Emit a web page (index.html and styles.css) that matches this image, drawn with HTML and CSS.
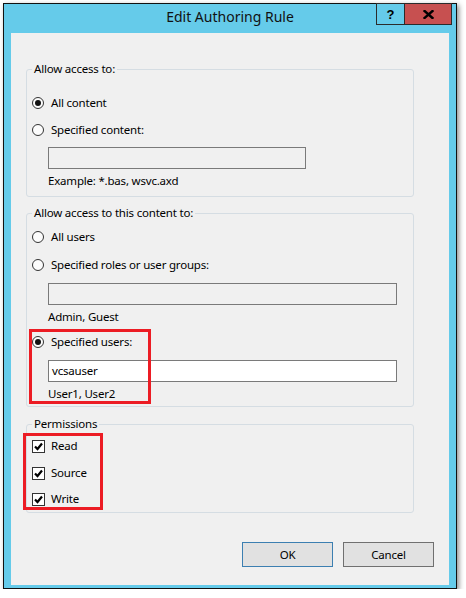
FILE: index.html
```html
<!DOCTYPE html>
<html lang="en">
<head>
<meta charset="utf-8">
<title>Edit Authoring Rule</title>
<link rel="stylesheet" href="styles.css">
</head>
<body>
<div class="window">
  <div class="titlebar">
    <div class="title">Edit Authoring Rule</div>
    <div class="controls">
      <div class="ctl help">?</div>
      <div class="ctl close">
        <svg width="11" height="9" viewBox="0 0 11 9"><path d="M1.5 1 L9.5 8 M9.5 1 L1.5 8" stroke="#000" stroke-width="2.4" stroke-linecap="square"/></svg>
      </div>
    </div>
  </div>
  <div class="content">
    <fieldset class="group g1">
      <legend>Allow access to:</legend>
      <div class="row r-first"><span class="radio on"></span><span>All content</span></div>
      <div class="row r-next"><span class="radio"></span><span>Specified content:</span></div>
      <div class="textbox short"></div>
      <div class="hint">Example: *.bas, wsvc.axd</div>
    </fieldset>
    <fieldset class="group g2">
      <legend>Allow access to this content to:</legend>
      <div class="row r-first2"><span class="radio"></span><span>All users</span></div>
      <div class="row r-next2"><span class="radio"></span><span>Specified roles or user groups:</span></div>
      <div class="textbox long"></div>
      <div class="hint">Admin, Guest</div>
      <div class="row r-next3"><span class="radio on"></span><span>Specified users:</span></div>
      <div class="textbox long active">vcsauser</div>
      <div class="hint">User1, User2</div>
    </fieldset>
    <fieldset class="group g3">
      <legend>Permissions</legend>
      <div class="row c-first"><span class="check"><svg width="11" height="11" viewBox="0 0 11 11"><path d="M2 5.5 L4.5 8 L9 2.5" fill="none" stroke="#000" stroke-width="2.2"/></svg></span><span>Read</span></div>
      <div class="row c-next"><span class="check"><svg width="11" height="11" viewBox="0 0 11 11"><path d="M2 5.5 L4.5 8 L9 2.5" fill="none" stroke="#000" stroke-width="2.2"/></svg></span><span>Source</span></div>
      <div class="row c-last"><span class="check"><svg width="11" height="11" viewBox="0 0 11 11"><path d="M2 5.5 L4.5 8 L9 2.5" fill="none" stroke="#000" stroke-width="2.2"/></svg></span><span>Write</span></div>
    </fieldset>
    <div class="buttons">
      <button class="btn default">OK</button>
      <button class="btn">Cancel</button>
    </div>
    <div class="highlight h1"></div>
    <div class="highlight h2"></div>
  </div>
</div>
</body>
</html>
```

FILE: styles.css
```css
html, body {
  margin: 0;
  padding: 0;
  background: #ffffff;
}

body {
  font-family: "Noto Sans", "Open Sans", sans-serif;
  font-size: 11.5px;
  letter-spacing: -0.2px;
  color: #000;
}

.window {
  margin: 3px 0 0 3px;
  width: 454px;
  height: 586px;
  box-sizing: border-box;
  border: 1px solid #111;
  background: #65cbea;
  box-shadow: 2px 2px 5px rgba(0, 0, 0, 0.45);
  display: flex;
  flex-direction: column;
}

.titlebar {
  height: 29px;
  flex: none;
  display: grid;
  grid-template-columns: 1fr auto 1fr;
}

.title {
  grid-column: 2;
  font-size: 14px;
  letter-spacing: 0;
  line-height: 20px;
  padding-top: 3px;
  color: #111;
}

.controls {
  grid-column: 3;
  justify-self: end;
  display: flex;
  margin-top: -1px;
  margin-right: 4px;
  height: 22px;
}

.ctl {
  box-sizing: border-box;
  height: 22px;
  border: 1px solid #2b2b2b;
  display: flex;
  align-items: center;
  justify-content: center;
}

.help {
  width: 28px;
  border-right: none;
  font-weight: bold;
  font-size: 13px;
  letter-spacing: 0;
  line-height: 1;
  background: #65cbea;
  font-family: "Liberation Sans", sans-serif;
}

.close {
  width: 48px;
  background: #c75050;
}

.content {
  position: relative;
  margin: 0 7px 3px 7px;
  height: 552px;
  background: #f0f0f0;
  display: flex;
  flex-direction: column;
  align-items: flex-start;
}

.group {
  box-sizing: border-box;
  width: 388px;
  margin: 0 0 0 15px;
  border: 1px solid #d5dde3;
  border-radius: 3px;
  padding: 0 0 0 5px;
  min-width: 0;
}

.group legend {
  padding: 0 2px;
  margin-left: 0;
  line-height: 16px;
  height: 16px;
}

.g1 { margin-top: 28px; padding-bottom: 7px; }
.g2 { margin-top: 8px; padding-bottom: 4px; }
.g3 { margin-top: 9px; padding-bottom: 5px; }

.row {
  display: flex;
  align-items: center;
  gap: 7px;
  height: 16px;
  line-height: 16px;
  white-space: nowrap;
}

.r-first { margin-top: 18px; }
.r-next { margin-top: 11px; }
.r-first2 { margin-top: 8px; }
.r-next2 { margin-top: 12px; }
.r-next3 { margin-top: 9px; }
.c-first { margin-top: 6px; gap: 6px; }
.c-next { margin-top: 11px; gap: 6px; }
.c-last { margin-top: 10px; gap: 6px; }

.radio {
  box-sizing: border-box;
  width: 12px;
  height: 12px;
  border: 1px solid #333;
  border-radius: 50%;
  background: #fcfcfc;
  display: flex;
  align-items: center;
  justify-content: center;
  flex: none;
}

.radio.on::after {
  content: "";
  width: 6px;
  height: 6px;
  border-radius: 50%;
  background: #111;
}

.check {
  box-sizing: border-box;
  width: 13px;
  height: 13px;
  border: 1px solid #333;
  background: #fff;
  display: flex;
  align-items: center;
  justify-content: center;
  flex: none;
}

.check svg { display: block; }

.textbox {
  box-sizing: border-box;
  height: 22px;
  margin: 10px 0 0 16px;
  border: 1px solid #7a7a7a;
  background: #f0f0f0;
  padding: 0 3px;
  line-height: 20px;
}

.textbox.short { width: 258px; margin-top: 9px; }
.textbox.long { width: 349px; }
.textbox.active { background: #fff; }

.hint {
  margin: 4px 0 0 16px;
  line-height: 16px;
  height: 16px;
}

.buttons {
  align-self: flex-end;
  display: flex;
  gap: 10px;
  margin: 29px 15px 0 0;
}

.btn {
  box-sizing: border-box;
  width: 91px;
  height: 25px;
  font-family: inherit;
  font-size: 11.5px;
  letter-spacing: -0.2px;
  color: #000;
  background: #e1e1e1;
  border: 1px solid #707070;
  border-radius: 0;
  padding: 0;
}

.btn.default {
  border-color: #3c7fb1;
}

.highlight {
  position: absolute;
  box-sizing: border-box;
  border: 3px solid #ec1c24;
  pointer-events: none;
}

.h1 { left: 18px; top: 296px; width: 122px; height: 75px; }
.h2 { left: 12px; top: 400px; width: 80px; height: 77px; }
```
